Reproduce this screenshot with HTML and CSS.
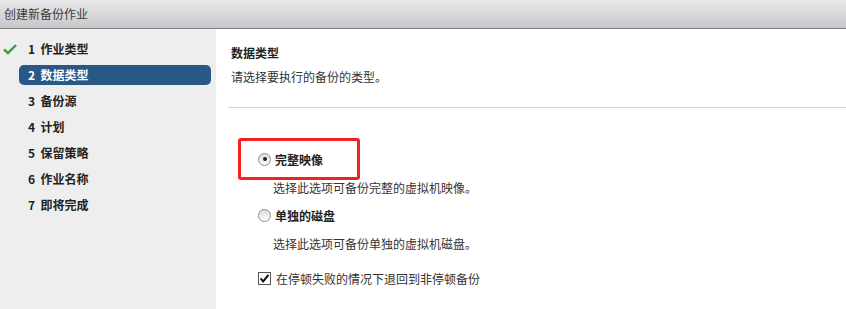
FILE: index.html
```html
<!DOCTYPE html>
<html lang="zh-CN">
<head>
    <meta charset="UTF-8">
    <title>创建新备份作业</title>
    <link rel="stylesheet" href="styles.css">
</head>
<body>
    <div class="header">创建新备份作业</div>
    <div class="main">
        <ul class="steps">
            <li class="step">
                <span class="check">
                    <svg width="14" height="11" viewBox="0 0 14 11"><path d="M1 5.5 L5 9.2 L13 1" fill="none" stroke="#3c9d3c" stroke-width="2.4"/></svg>
                </span>
                <span class="label">1&nbsp; 作业类型</span>
            </li>
            <li class="step"><span class="check"></span><span class="label active">2&nbsp; 数据类型</span></li>
            <li class="step"><span class="check"></span><span class="label">3&nbsp; 备份源</span></li>
            <li class="step"><span class="check"></span><span class="label">4&nbsp; 计划</span></li>
            <li class="step"><span class="check"></span><span class="label">5&nbsp; 保留策略</span></li>
            <li class="step"><span class="check"></span><span class="label">6&nbsp; 作业名称</span></li>
            <li class="step"><span class="check"></span><span class="label">7&nbsp; 即将完成</span></li>
        </ul>
        <div class="content">
            <div class="intro">
                <h2>数据类型</h2>
                <p>请选择要执行的备份的类型。</p>
            </div>
            <div class="rule"></div>
            <div class="options">
                <div class="highlight">
                    <span class="radio checked"></span>
                    <span class="opt-label">完整映像</span>
                </div>
                <p class="hint first">选择此选项可备份完整的虚拟机映像。</p>
                <div class="option">
                    <span class="radio"></span>
                    <span class="opt-label">单独的磁盘</span>
                </div>
                <p class="hint">选择此选项可备份单独的虚拟机磁盘。</p>
                <div class="option tick">
                    <span class="checkbox">
                        <svg width="13" height="13" viewBox="0 0 13 13"><rect x="0.5" y="0.5" width="12" height="12" fill="#fff" stroke="#555"/><path d="M2.6 6.4 L5.2 9.4 L10.4 2.8" fill="none" stroke="#111" stroke-width="2"/></svg>
                    </span>
                    <span class="tick-label">在停顿失败的情况下退回到非停顿备份</span>
                </div>
            </div>
        </div>
    </div>
</body>
</html>
```

FILE: styles.css
```css
body {
    margin: 0;
    font-family: "Noto Sans CJK SC", "Liberation Sans", sans-serif;
    font-size: 12px;
    color: #333;
    background-color: #fff;
}
.header {
    height: 28px;
    line-height: 28px;
    padding-left: 4px;
    color: #3a3a3a;
    background: linear-gradient(#e9e9eb, #c7c7cb);
    border-bottom: 1px solid #7d7d7d;
}
.main {
    display: flex;
    height: 280px;
}
.steps {
    width: 216px;
    margin: 0;
    padding: 7px 0 0 0;
    list-style: none;
    background-color: #eeeeee;
}
.step {
    display: flex;
    align-items: center;
    height: 26px;
}
.check {
    display: flex;
    width: 19px;
    padding-left: 3px;
    box-sizing: border-box;
}
.label {
    width: 192px;
    height: 20px;
    line-height: 20px;
    padding-left: 9px;
    box-sizing: border-box;
    font-weight: bold;
    color: #222;
    border-radius: 5px;
}
.label.active {
    background-color: #2a5886;
    color: #fff;
}
.content {
    flex: 1;
    padding: 16px 0 0 12px;
}
.intro {
    padding-left: 3px;
}
.intro h2 {
    margin: 0;
    font-size: 12px;
    line-height: 16px;
    font-weight: bold;
    color: #222;
}
.intro p {
    margin: 8px 0 0 0;
    line-height: 16px;
}
.rule {
    margin-top: 22px;
    border-top: 1px solid #d6d6d6;
}
.options {
    margin-top: 30px;
    padding-left: 10px;
}
.highlight {
    display: flex;
    align-items: center;
    width: 122px;
    height: 42px;
    padding-left: 17px;
    box-sizing: border-box;
    border: 3px solid #f52020;
    border-radius: 3px;
}
.option {
    display: flex;
    align-items: center;
    height: 16px;
    margin-top: 11px;
    padding-left: 20px;
}
.option.tick {
    margin-top: 18px;
}
.radio {
    position: relative;
    width: 13px;
    height: 13px;
    box-sizing: border-box;
    border: 1px solid #8c8c8c;
    border-radius: 50%;
    background: linear-gradient(#dcdcdc, #ffffff);
}
.radio.checked::after {
    content: "";
    position: absolute;
    left: 3.5px;
    top: 3.5px;
    width: 4px;
    height: 4px;
    border-radius: 50%;
    background-color: #222;
}
.opt-label {
    margin-left: 4px;
    font-weight: bold;
    color: #222;
}
.checkbox {
    display: flex;
}
.tick-label {
    margin-left: 5px;
}
.hint {
    margin: 13px 0 0 0;
    padding-left: 35px;
    line-height: 16px;
}
.hint.first {
    margin-top: 0;
}
```
